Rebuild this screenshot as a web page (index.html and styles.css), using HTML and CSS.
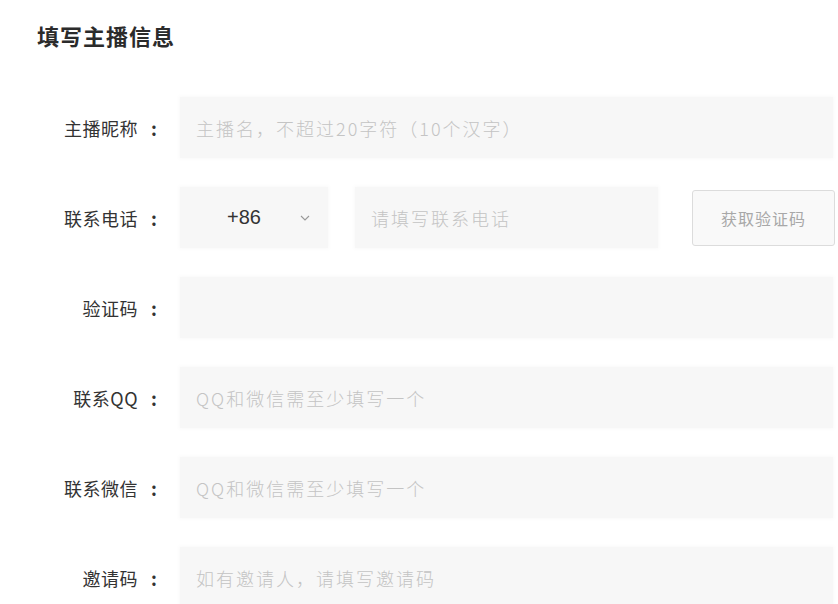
FILE: index.html
```html
<!DOCTYPE html>
<html lang="zh-CN">
<head>
    <meta charset="utf-8">
    <title>填写主播信息</title>
    <link rel="stylesheet" href="styles.css">
</head>
<body>
<div class="page">
    <h1 class="title">填写主播信息</h1>

    <form class="anchor-form">
        <div class="form-row">
            <label class="form-label" for="nickname">主播昵称<span class="colon">:</span></label>
            <input class="field" type="text" id="nickname" placeholder="主播名，不超过20字符（10个汉字）">
        </div>

        <div class="form-row">
            <label class="form-label" for="phone">联系电话<span class="colon">:</span></label>
            <div class="phone-group">
                <div class="area-select">
                    <span class="area-code">+86</span>
                    <svg class="chevron" width="10" height="6" viewBox="0 0 10 6">
                        <path d="M1 1 L5 5 L9 1" fill="none" stroke="#999" stroke-width="1.1"/>
                    </svg>
                </div>
                <input class="field phone-field" type="text" id="phone" placeholder="请填写联系电话">
                <button class="code-btn" type="button">获取验证码</button>
            </div>
        </div>

        <div class="form-row">
            <label class="form-label" for="code">验证码<span class="colon">:</span></label>
            <input class="field" type="text" id="code">
        </div>

        <div class="form-row">
            <label class="form-label" for="qq">联系QQ<span class="colon">:</span></label>
            <input class="field" type="text" id="qq" placeholder="QQ和微信需至少填写一个">
        </div>

        <div class="form-row">
            <label class="form-label" for="wechat">联系微信<span class="colon">:</span></label>
            <input class="field" type="text" id="wechat" placeholder="QQ和微信需至少填写一个">
        </div>

        <div class="form-row">
            <label class="form-label" for="invite">邀请码<span class="colon">:</span></label>
            <input class="field" type="text" id="invite" placeholder="如有邀请人，请填写邀请码">
        </div>
    </form>
</div>
</body>
</html>
```

FILE: styles.css
```css
body {
    margin: 0;
    background-color: #fff;
    font-family: "Microsoft YaHei", "Noto Sans CJK SC", "Noto Sans", sans-serif;
    color: #333;
}

.page {
    padding: 20px 5px 0 37px;
}

.title {
    margin: 0 0 47px 0;
    font-size: 22px;
    line-height: 30px;
    letter-spacing: 1px;
    font-weight: bold;
    color: #2b2b2b;
}

.form-row {
    display: flex;
    align-items: center;
    height: 61px;
    margin-bottom: 29px;
}

.form-label {
    width: 121px;
    flex-shrink: 0;
    margin-right: 22px;
    text-align: right;
    font-size: 18px;
    letter-spacing: 0.5px;
    color: #333;
    white-space: nowrap;
}

.colon {
    display: inline-block;
    width: 8px;
    margin-left: 12px;
    text-align: center;
    font-weight: bold;
    letter-spacing: 0;
}

.field {
    flex: 1;
    height: 100%;
    box-sizing: border-box;
    padding: 0 16px;
    border: none;
    outline: none;
    background-color: #f7f7f7;
    box-shadow: 0 0 4px 1px #f9f9f9;
    font-family: inherit;
    font-size: 18px;
    color: #333;
}

.field::placeholder {
    font-family: "Noto Sans CJK TC", "Noto Sans CJK SC", sans-serif;
    font-weight: 300;
    letter-spacing: 2px;
    color: #c4c4c4;
}

.phone-group {
    flex: 1;
    height: 100%;
    display: flex;
    align-items: center;
}

.area-select {
    width: 148px;
    height: 100%;
    flex-shrink: 0;
    margin-right: 27px;
    background-color: #f7f7f7;
    box-shadow: 0 0 4px 1px #f9f9f9;
    display: flex;
    align-items: center;
    padding-left: 47px;
    box-sizing: border-box;
}

.area-code {
    font-family: "Liberation Sans", "Noto Sans", sans-serif;
    font-size: 20px;
    color: #333;
}

.chevron {
    margin-left: 39px;
}

.phone-field {
    flex: 0 0 303px;
}

.code-btn {
    margin-left: 34px;
    width: 143px;
    height: 56px;
    flex-shrink: 0;
    background-color: #f9f9f9;
    border: 1px solid #dcdcdc;
    border-radius: 3px;
    font-family: inherit;
    font-size: 16px;
    letter-spacing: 1px;
    color: #a8a8a8;
    cursor: pointer;
}
```
